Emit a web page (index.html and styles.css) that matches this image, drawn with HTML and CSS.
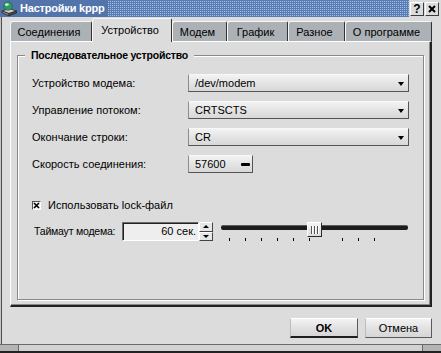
FILE: index.html
```html
<!DOCTYPE html>
<html lang="ru">
<head>
<meta charset="utf-8">
<title>Настройки kppp</title>
<link rel="stylesheet" href="styles.css">
</head>
<body>
<div class="window">
  <div class="titlebar">
    <div class="title-area">
      <svg class="appicon" width="16" height="16" viewBox="0 0 16 16">
        <path d="M1 10 L8 7.5 L15.5 10 L8 12.5 Z" fill="#cfcfcf" stroke="#2a2a2a" stroke-width="0.8"/>
        <path d="M1 10 L1 12 L8 14.8 L8 12.5 Z" fill="#8a8a8a" stroke="#2a2a2a" stroke-width="0.8"/>
        <path d="M15.5 10 L15.5 12 L8 14.8 L8 12.5 Z" fill="#4a4a4a" stroke="#2a2a2a" stroke-width="0.8"/>
        <circle cx="7" cy="5" r="4.3" fill="#2f9a66" stroke="#1b5a3a" stroke-width="0.6"/>
        <ellipse cx="5.8" cy="3.6" rx="2" ry="1.3" fill="#c4f2d2"/>
      </svg>
      <span class="title">Настройки kppp</span>
    </div>
    <div class="tb-fill"></div>
    <div class="tb-btns">
      <span class="tb-btn">?</span>
      <span class="tb-btn">
        <svg width="8" height="8" viewBox="0 0 8 8"><path d="M1 1 L7 7 M7 1 L1 7" stroke="#000" stroke-width="2"/></svg>
      </span>
    </div>
  </div>

  <div class="main">
    <div class="tabs">
      <div class="tab t1">Соединения</div>
      <div class="tab active t2">Устройство</div>
      <div class="tab t3">Модем</div>
      <div class="tab t4">График</div>
      <div class="tab t5">Разное</div>
      <div class="tab t6">О программе</div>
    </div>

    <div class="pane">
      <div class="group">
        <div class="group-title">Последовательное устройство</div>

        <div class="form">
          <span class="label">Устройство модема:</span>
          <div class="combo"><span>/dev/modem</span><i class="arrow"></i></div>

          <span class="label">Управление потоком:</span>
          <div class="combo"><span>CRTSCTS</span><i class="arrow"></i></div>

          <span class="label">Окончание строки:</span>
          <div class="combo"><span>CR</span><i class="arrow"></i></div>

          <span class="label">Скорость соединения:</span>
          <div class="combo small"><span>57600</span><i class="bar"></i></div>
        </div>

        <div class="check-row">
          <span class="checkbox">
            <svg width="7" height="7" viewBox="0 0 7 7"><path d="M1 1 L6 6 M6 1 L1 6" stroke="#000" stroke-width="1.6"/></svg>
          </span>
          <span>Использовать lock-файл</span>
        </div>

        <div class="timeout-row">
          <span class="timeout-label">Таймаут модема:</span>
          <div class="spin">
            <div class="spin-input">60 сек.</div>
            <div class="spin-btns">
              <span class="spin-btn"><i class="up"></i></span>
              <span class="spin-btn"><i class="down"></i></span>
            </div>
          </div>
          <div class="slider">
            <div class="slider-track">
              <span class="groove l"></span>
              <span class="handle"><i></i><i></i><i></i></span>
              <span class="groove r"></span>
            </div>
            <div class="ticks">
              <i></i><i></i><i></i><i></i><i></i><i></i><i class="gap"></i><i></i><i></i>
            </div>
          </div>
        </div>
      </div>
    </div>

    <div class="buttons">
      <button class="btn default">OK</button>
      <button class="btn cancel">Отмена</button>
    </div>
  </div>

  <div class="frame-bottom">
    <span class="corner l"></span>
    <span class="mid"></span>
    <span class="corner r"></span>
  </div>
</div>
</body>
</html>
```

FILE: styles.css
```css
* { box-sizing: border-box; }

html, body {
  margin: 0;
  padding: 0;
}

body {
  width: 441px;
  height: 353px;
  overflow: hidden;
  background: #dcdcdc;
  font-family: "Liberation Sans", Arial, sans-serif;
  font-size: 11px;
  color: #000;
}

.window {
  height: 353px;
  display: flex;
  flex-direction: column;
  box-shadow: inset 1px 0 #c4c4c4, inset 2px 0 #505050;
}

/* ---------- title bar ---------- */
.titlebar {
  height: 17px;
  display: flex;
  align-items: stretch;
  flex: none;
}

.title-area {
  display: flex;
  align-items: center;
  background: #5274ab;
  padding: 0 3px 0 1px;
}

.appicon { display: block; margin-right: 3px; }

.title {
  color: #fff;
  font-weight: bold;
  font-size: 11px;
  line-height: 17px;
  letter-spacing: -0.2px;
}

.tb-fill {
  flex: 1;
  background-color: #5a7cb4;
  background-image:
    linear-gradient(#5a7cb4 1px, transparent 1px),
    linear-gradient(90deg, #a6bfe4 1px, transparent 1px);
  background-size: 2px 2px, 2px 2px;
}

.tb-btns {
  display: flex;
  align-items: center;
  gap: 1px;
  padding: 0 2px 0 1px;
  background: #dcdcdc;
}

.tb-btn {
  width: 14px;
  height: 14px;
  border: 1px solid;
  border-color: #fff #3c3c3c #3c3c3c #fff;
  background: #dcdcdc;
  display: flex;
  align-items: center;
  justify-content: center;
  font-weight: bold;
  font-size: 12px;
  line-height: 12px;
}

/* ---------- main ---------- */
.main {
  flex: 1;
  display: flex;
  flex-direction: column;
  padding: 1px 9px 0 10px;
}

.tabs {
  display: flex;
  align-items: flex-end;
  height: 23px;
}

.tab {
  height: 20px;
  background: #abb1b5;
  border-top: 1px solid #f6f6f6;
  border-left: 1px solid #f6f6f6;
  border-right: 1px solid #333;
  border-radius: 3px 2px 0 0;
  display: flex;
  align-items: center;
  justify-content: center;
  padding: 1px 4px 0 0;
  white-space: nowrap;
}

.tab.active {
  height: 24px;
  margin-bottom: -1px;
  background: #dcdcdc;
  position: relative;
  z-index: 1;
  padding-bottom: 3px;
}

.t1 { width: 82px; }
.t2 { width: 80px; }
.t3 { width: 55px; }
.t4 { width: 61px; }
.t5 { width: 57px; }
.t6 { width: 87px; }

.pane {
  height: 266px;
  border-style: solid;
  border-width: 1px 2px 2px 1px;
  border-color: #fff #222 #222 #fff;
  box-shadow: inset -1px -1px 0 #8a8a8a;
  padding: 13px 6px 5px 6px;
  display: flex;
  flex-direction: column;
}

.group {
  flex: 1;
  border: 1px solid #8a8a8a;
  box-shadow: 1px 1px 0 #fff, inset 1px 1px 0 #fff;
  display: flex;
  flex-direction: column;
  padding: 0 14px;
}

.group-title {
  align-self: flex-start;
  margin: -8px 0 0 -7px;
  padding: 0 6px;
  height: 14px;
  line-height: 14px;
  background: #dcdcdc;
  font-weight: bold;
  font-size: 10.5px;
  letter-spacing: -0.2px;
}

.form {
  display: grid;
  grid-template-columns: 156px 221px;
  grid-auto-rows: 18px;
  row-gap: 9px;
  margin-top: 12px;
  align-items: center;
}

.label { white-space: nowrap; }

.combo {
  height: 18px;
  display: flex;
  align-items: center;
  justify-content: space-between;
  padding: 0 4px 0 6px;
  border: 1px solid;
  border-color: #f8f8f8 #555 #555 #8c8c8c;
  background: linear-gradient(#f3f3f3, #e4e4e4 50%, #d8d8d8);
}

.combo.small {
  width: 65px;
  justify-self: start;
  padding-right: 2px;
}

.arrow {
  width: 0;
  height: 0;
  border-left: 3px solid transparent;
  border-right: 3px solid transparent;
  border-top: 4px solid #000;
  margin-top: 1px;
}

.bar {
  width: 9px;
  height: 3px;
  background: #000;
  border-radius: 1px;
}

.check-row {
  display: flex;
  align-items: center;
  gap: 7px;
  height: 14px;
  margin-top: 25px;
}

.checkbox {
  width: 9px;
  height: 9px;
  border: 1px solid;
  border-color: #555 #fff #fff #555;
  background: #f4f4f4;
  display: flex;
  align-items: center;
  justify-content: center;
}

.checkbox svg { display: block; }

.timeout-row {
  display: flex;
  align-items: flex-start;
  margin-top: 10px;
  height: 20px;
}

.timeout-label {
  flex: none;
  width: 90px;
  padding-left: 2px;
  line-height: 19px;
  white-space: nowrap;
  font-size: 10.5px;
  letter-spacing: -0.2px;
}

.spin { display: flex; flex: none; }

.spin-input {
  width: 77px;
  height: 19px;
  border: 1px solid;
  border-color: #6a6a6a #fff #fff #6a6a6a;
  box-shadow: inset 1px 1px 0 #222;
  background: #eeeeee;
  text-align: right;
  padding-right: 2px;
  line-height: 17px;
}

.spin-btns {
  display: flex;
  flex-direction: column;
  width: 14px;
  height: 19px;
}

.spin-btn {
  flex: 1;
  border: 1px solid;
  border-color: #fff #444 #444 #fff;
  background: #e6e6e6;
  display: flex;
  align-items: center;
  justify-content: center;
}

.spin-btn .up {
  width: 0; height: 0;
  border-left: 3px solid transparent;
  border-right: 3px solid transparent;
  border-bottom: 3px solid #000;
}

.spin-btn .down {
  width: 0; height: 0;
  border-left: 3px solid transparent;
  border-right: 3px solid transparent;
  border-top: 3px solid #000;
}

.slider {
  flex: none;
  margin-left: 8px;
  width: 187px;
}

.slider-track {
  display: flex;
  align-items: flex-start;
  height: 15px;
}

.groove {
  flex: 1;
  height: 5px;
  margin-top: 3px;
  background: #1c1c1c;
  border-top: 1px solid #5a5a5a;
}

.groove.l { border-radius: 2px 0 0 2px; }
.groove.r { border-radius: 0 2px 2px 0; }

.handle {
  width: 15px;
  height: 15px;
  border: 1px solid;
  border-color: #fff #2a2a2a #2a2a2a #fff;
  background: linear-gradient(#f4f4f4, #dcdcdc);
  display: flex;
  align-items: center;
  justify-content: center;
  gap: 1px;
}

.handle i {
  width: 1px;
  height: 8px;
  background: #555;
  box-shadow: 1px 0 #fff;
  margin-right: 1px;
}

.ticks {
  display: flex;
  height: 3px;
  margin-top: 1px;
}

.ticks i {
  width: 1px;
  height: 3px;
  background: #000;
  margin-left: 15px;
}

.ticks i:first-child { margin-left: 8px; }
.ticks i.gap { margin-left: 32px; }

/* ---------- dialog buttons ---------- */
.buttons {
  display: flex;
  justify-content: flex-end;
  gap: 7px;
  margin-top: 11px;
}

.btn {
  height: 20px;
  width: 67px;
  padding: 0;
  font-family: "Liberation Sans", Arial, sans-serif;
  font-size: 11px;
  color: #000;
  border: 1px solid;
  border-color: #fff #5a5a5a #5a5a5a #bdbdbd;
  background: linear-gradient(#f3f3f3, #e2e2e2 50%, #d6d6d6);
}

.btn.default {
  width: 68px;
  font-weight: bold;
  border-bottom: 2px solid #1e1e1e;
}

/* ---------- bottom frame ---------- */
.frame-bottom {
  height: 9px;
  flex: none;
  display: flex;
  border-top: 1px solid #6a6a6a;
  border-bottom: 2px solid #222;
  background: #d2d2d2;
}

.frame-bottom .corner {
  width: 19px;
  background: #b4b4b4;
}

.frame-bottom .corner.l { border-right: 1px solid #6a6a6a; }
.frame-bottom .corner.r { border-left: 1px solid #6a6a6a; }
.frame-bottom .mid { flex: 1; }
```
